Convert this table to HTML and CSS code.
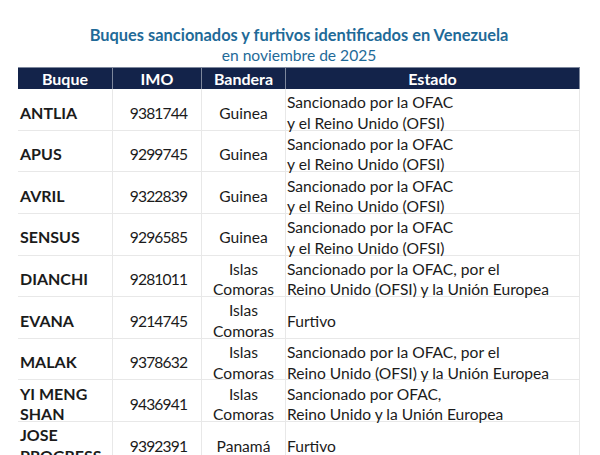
FILE: index.html
```html
<!DOCTYPE html>
<html lang="es">
<head>
<meta charset="utf-8">
<link rel="stylesheet" href="styles.css">
</head>
<body>
<div class="page">
  <div class="heading">
    <div class="title">Buques sancionados y furtivos identificados en Venezuela</div>
    <div class="subtitle">en noviembre de 2025</div>
  </div>
  <div class="table">
    <div class="th">Buque</div><div class="th">IMO</div><div class="th">Bandera</div><div class="th last">Estado</div>

    <div class="td name">ANTLIA</div><div class="td c num">9381744</div><div class="td c">Guinea</div><div class="td st">Sancionado por la OFAC<br>y el Reino Unido (OFSI)</div>
    <div class="td name">APUS</div><div class="td c num">9299745</div><div class="td c">Guinea</div><div class="td st">Sancionado por la OFAC<br>y el Reino Unido (OFSI)</div>
    <div class="td name">AVRIL</div><div class="td c num">9322839</div><div class="td c">Guinea</div><div class="td st">Sancionado por la OFAC<br>y el Reino Unido (OFSI)</div>
    <div class="td name">SENSUS</div><div class="td c num">9296585</div><div class="td c">Guinea</div><div class="td st">Sancionado por la OFAC<br>y el Reino Unido (OFSI)</div>
    <div class="td name">DIANCHI</div><div class="td c num">9281011</div><div class="td c">Islas<br>Comoras</div><div class="td st">Sancionado por la OFAC, por el<br>Reino Unido (OFSI) y la Unión Europea</div>
    <div class="td name">EVANA</div><div class="td c num">9214745</div><div class="td c">Islas<br>Comoras</div><div class="td st">Furtivo</div>
    <div class="td name">MALAK</div><div class="td c num">9378632</div><div class="td c">Islas<br>Comoras</div><div class="td st">Sancionado por la OFAC, por el<br>Reino Unido (OFSI) y la Unión Europea</div>
    <div class="td name">YI MENG<br>SHAN</div><div class="td c num">9436941</div><div class="td c">Islas<br>Comoras</div><div class="td st">Sancionado por OFAC,<br>Reino Unido y la Unión Europea</div>
    <div class="td name">JOSE<br>PROGRESS</div><div class="td c num">9392391</div><div class="td c">Panamá</div><div class="td st">Furtivo</div>
  </div>
</div>
</body>
</html>
```
FILE: styles.css
```css
html, body {
  margin: 0;
  padding: 0;
  background: #ffffff;
}
body {
  font-family: Lato, "Open Sans", sans-serif;
  color: #1b1b1b;
  overflow: hidden;
}
.page {
  width: 600px;
  height: 455px;
  overflow: hidden;
  padding-top: 24px;
  box-sizing: border-box;
}
.heading {
  text-align: center;
  color: #1f6a98;
  padding-right: 2px;
}
.title {
  font-size: 16.4px;
  font-weight: 700;
  line-height: 21px;
}
.subtitle {
  font-size: 15.6px;
  font-weight: 400;
  line-height: 20px;
}
.table {
  margin: 2px 0 0 18px;
  width: 562px;
  display: grid;
  grid-template-columns: 95px 89px 84px 294px;
  grid-template-rows: 22px;
  grid-auto-rows: 41.625px;
}
.th {
  background: #13234a;
  color: #ffffff;
  font-weight: 700;
  font-size: 16px;
  text-align: center;
  line-height: 22px;
  border-right: 1px solid #7d879c;
  border-top: 1px solid #7d879c;
}
.td {
  font-size: 15.6px;
  line-height: 20.5px;
  border-right: 1px solid #e8e8e8;
  border-bottom: 1px solid #e8e8e8;
  display: flex;
  flex-direction: column;
  justify-content: center;
  padding-top: 7px;
  box-sizing: border-box;
}
.name {
  font-weight: 700;
  font-size: 16px;
  padding-left: 2px;
}
.c {
  text-align: center;
}
.num {
  letter-spacing: -0.8px;
  padding-left: 3px;
}
.st {
  padding-left: 1px;
}
```
